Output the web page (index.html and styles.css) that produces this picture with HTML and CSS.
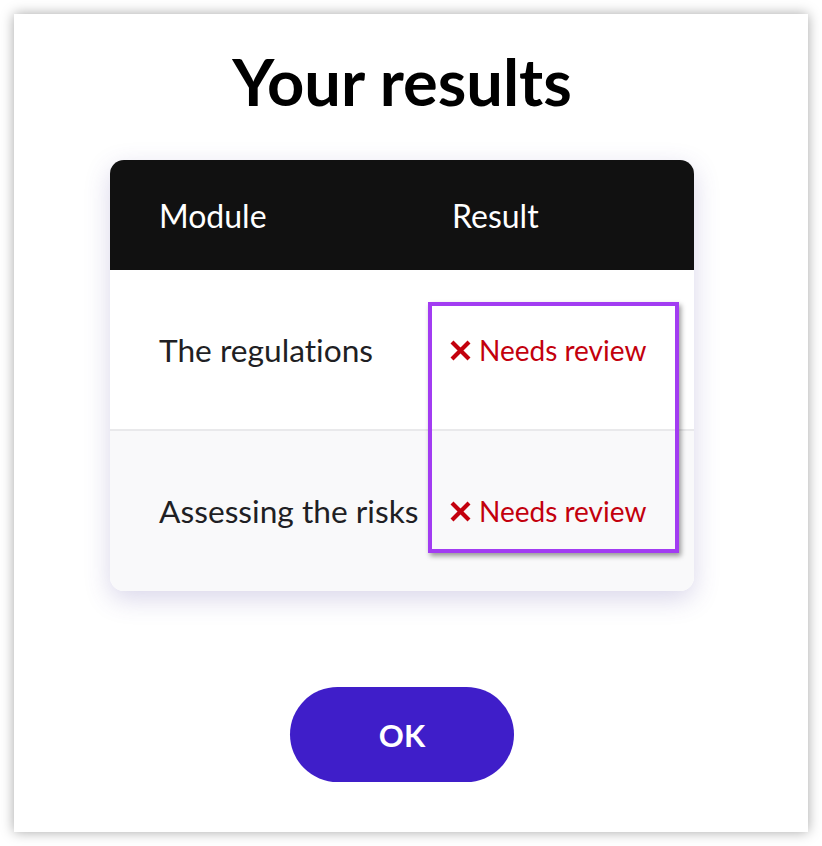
FILE: index.html
```html
<!DOCTYPE html>
<html lang="en">
<head>
<meta charset="utf-8">
<link rel="stylesheet" href="styles.css">
</head>
<body>
<div class="card">
  <h1 class="title">Your results</h1>
  <div class="table-wrap">
    <div class="table">
      <div class="row head">
        <div class="cell c1">Module</div>
        <div class="cell c2">Result</div>
      </div>
      <div class="row">
        <div class="cell c1">The regulations</div>
        <div class="cell c2 bad"><svg class="x" viewBox="0 0 21 21" width="21" height="21"><path d="M2 2 L19 19 M19 2 L2 19" stroke="#c3000d" stroke-width="4.2" fill="none"/></svg>Needs review</div>
      </div>
      <div class="row alt">
        <div class="cell c1">Assessing the risks</div>
        <div class="cell c2 bad"><svg class="x" viewBox="0 0 21 21" width="21" height="21"><path d="M2 2 L19 19 M19 2 L2 19" stroke="#c3000d" stroke-width="4.2" fill="none"/></svg>Needs review</div>
      </div>
    </div>
    <div class="highlight"></div>
  </div>
  <div class="actions"><button class="ok">OK</button></div>
</div>
</body>
</html>
```
FILE: styles.css
```css
html, body { margin: 0; padding: 0; background: #ffffff; }
body { width: 822px; height: 846px; padding: 14px; box-sizing: border-box; font-family: Lato, "Open Sans", sans-serif; font-variant-ligatures: none; }
.card {
  width: 794px; height: 818px; background: #fff;
  box-shadow: 0 0 12px rgba(0,0,0,0.35);
  box-sizing: border-box; padding: 35px 114px 0 96px;
  display: flex; flex-direction: column; align-items: center;
}
.title { margin: 0; font-size: 65px; font-weight: 700; color: #000; line-height: 1; height: 111px; text-align: center; white-space: nowrap; }
.table-wrap { position: relative; width: 584px; }
.table {
  border-radius: 14px; overflow: hidden; background: #fff;
  box-shadow: 0 8px 26px rgba(80, 70, 160, 0.22);
}
.row { display: flex; align-items: center; height: 159px; font-size: 31.7px; color: #1f1f24; white-space: nowrap; }
.row.head { height: 110px; background: #111111; color: #fff; font-size: 32px; }
.row.alt { background: #f9f9fa; height: 162px; border-top: 2px solid #e9e9eb; box-sizing: border-box; }
.cell.c1 { flex: none; padding-left: 49px; width: 342px; box-sizing: border-box; }
.cell.c2 { flex: none; }
.bad { color: #c3000d; font-size: 28px; display: flex; align-items: center; margin-left: -2px; }
.x { flex: none; width: 21px; height: 21px; margin-right: 8px; margin-top: 1px; }
.highlight {
  position: absolute; left: 318px; top: 142px; width: 251px; height: 251px;
  border: 4px solid #a23cf2; box-sizing: border-box;
  box-shadow: 2px 3px 5px rgba(0,0,0,0.4);
}
.actions { margin-top: 96px; }
.ok {
  width: 224px; height: 95px; border: none; border-radius: 48px;
  background: #3f1ec9; color: #fff; font-family: Lato, sans-serif; font-weight: 700; font-size: 31px;
}
```
